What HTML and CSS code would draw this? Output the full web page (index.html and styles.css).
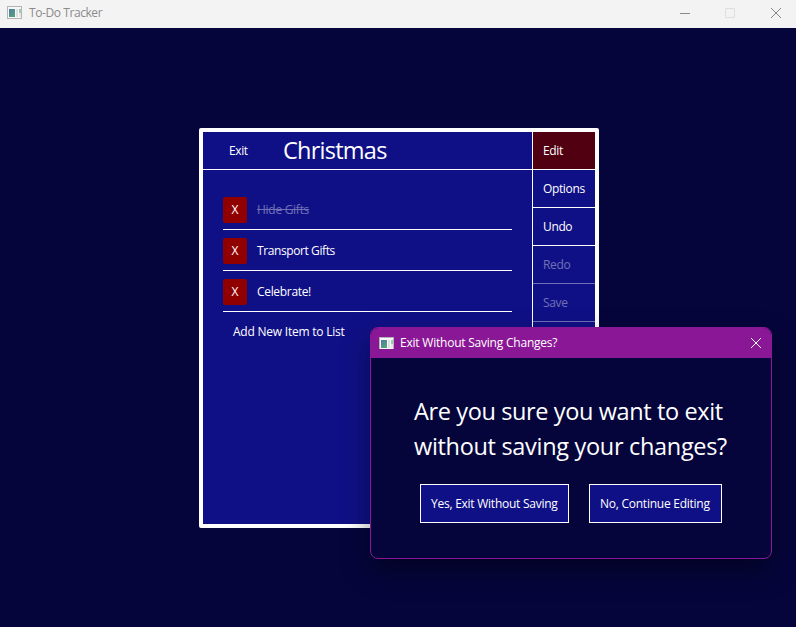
FILE: index.html
```html
<!DOCTYPE html>
<html lang="en">
<head>
<meta charset="utf-8">
<title>To-Do Tracker</title>
<link rel="stylesheet" href="styles.css">
</head>
<body>
<svg class="defs" width="0" height="0" aria-hidden="true">
  <defs>
    <linearGradient id="pane" x1="0" y1="0" x2="0.7" y2="1">
      <stop offset="0" stop-color="#4d78a8"/>
      <stop offset="1" stop-color="#55a37b"/>
    </linearGradient>
    <symbol id="app" viewBox="0 0 15 13">
      <rect width="15" height="13" fill="#b4b4b4"/>
      <rect x="1" y="1" width="13" height="11" fill="#f7f7f7"/>
      <rect x="2" y="3" width="6" height="8" fill="url(#pane)"/>
      <rect x="9" y="3" width="2" height="8" fill="#dedede"/>
      <rect x="12" y="3" width="2" height="4" fill="#9fc9b9"/>
      <rect x="12" y="7" width="2" height="4" fill="#e6e6e6"/>
    </symbol>
  </defs>
</svg>
<div class="window">
  <header class="titlebar">
    <svg class="app-icon" width="15" height="13"><use href="#app"/></svg>
    <span class="title">To-Do Tracker</span>
    <div class="controls">
      <svg width="10" height="10" viewBox="0 0 10 10"><path d="M0 5.5H10" stroke="#8a8a8a"/></svg>
      <svg width="10" height="10" viewBox="0 0 10 10"><rect x=".5" y=".5" width="9" height="9" rx=".5" fill="none" stroke="#dedede"/></svg>
      <svg width="10" height="10" viewBox="0 0 10 10"><path d="M0 0L10 10M10 0L0 10" stroke="#858585"/></svg>
    </div>
  </header>
  <main class="desktop">
    <section class="card">
      <div class="main">
        <div class="head"><span class="exit">Exit</span><h1>Christmas</h1></div>
        <ul class="items">
          <li><button class="remove">X</button><span class="done">Hide Gifts</span></li>
          <li><button class="remove">X</button><span>Transport Gifts</span></li>
          <li><button class="remove">X</button><span class="celebrate">Celebrate!</span></li>
        </ul>
        <div class="add"><span>Add New Item to List</span></div>
      </div>
      <nav class="side">
        <div class="entry active">Edit</div>
        <div class="entry">Options</div>
        <div class="entry">Undo</div>
        <div class="entry off">Redo</div>
        <div class="entry off">Save</div>
      </nav>
    </section>
  </main>
  <section class="dialog">
    <header class="dialog-bar">
      <svg class="app-icon" width="15" height="12" viewBox="0 0 15 12"><use href="#app" width="15" height="13"/></svg>
      <span class="dialog-title">Exit Without Saving Changes?</span>
      <svg class="close" width="10" height="10" viewBox="0 0 10 10"><path d="M0 0L10 10M10 0L0 10" stroke="#fff"/></svg>
    </header>
    <div class="dialog-body">
      <p class="question"><span class="q1">Are you sure you want to exit</span><br><span class="q2">without saving your changes?</span></p>
      <div class="actions">
        <button class="yes">Yes, Exit Without Saving</button>
        <button class="no">No, Continue Editing</button>
      </div>
    </div>
  </section>
</div>
</body>
</html>
```
FILE: styles.css
```css
* { box-sizing: border-box; }
body {
  margin: 0;
  font: 12px/16px "Open Sans", "Noto Sans", sans-serif;
  color: #fff;
  white-space: nowrap;
}
svg { display: block; flex: none; }
.defs { position: absolute; }
button { font: inherit; color: inherit; padding: 0; border: 0; }
.window {
  position: relative;
  width: 796px;
  height: 627px;
  background: #05053c;
  overflow: hidden;
  display: flex;
  flex-direction: column;
}
.titlebar {
  height: 28px;
  background: #f3f3f3;
  color: #8b8b8b;
  display: flex;
  align-items: center;
  padding: 0 15px 3px 7px;
}
.title { margin-left: 7px; letter-spacing: -0.42px; }
.controls { margin-left: auto; display: flex; gap: 36px; }
.controls svg:first-child { margin-right: -1px; }
.desktop { flex: 1; padding: 100px 0 0 199px; }
.card {
  width: 400px;
  height: 400px;
  border: 4px solid #fff;
  border-radius: 2px;
  background: #101086;
  display: flex;
}
.main { flex: 1; }
.head {
  height: 38px;
  border-bottom: 1px solid #fff;
  display: flex;
  align-items: center;
  padding-left: 26px;
}
.exit { width: 54px; letter-spacing: -0.4px; }
h1 { margin: 0; padding-bottom: 1px; font-size: 23.5px; line-height: 32px; font-weight: 400; letter-spacing: -0.75px; }
.items { list-style: none; margin: 19px 20px 0; padding: 0; }
.items li {
  height: 41px;
  padding: 8px 0 6px;
  border-bottom: 1px solid #fff;
  display: flex;
  align-items: center;
  gap: 10px;
  letter-spacing: -0.4px;
}
.remove { width: 24px; height: 26px; border-radius: 2px; background: #900000; }
.done { color: #7070b6; text-decoration: line-through; letter-spacing: -0.28px; }
.celebrate { letter-spacing: -0.32px; }
.add { padding: 12px 0 0 30px; letter-spacing: -0.22px; }
.side { width: 63px; border-left: 1px solid #fff; }
.entry {
  height: 38px;
  border-bottom: 1px solid #fff;
  padding: 11px 0 0 10px;
  letter-spacing: -0.36px;
}
.active { background: #500010; }
.off { color: #7070b6; border-color: #7070b6; }
.dialog {
  position: absolute;
  left: 370px;
  top: 327px;
  width: 402px;
  height: 232px;
  border: 1px solid #8a1795;
  border-radius: 8px;
  background: #05053c;
  overflow: hidden;
  box-shadow: 0 12px 28px rgba(0, 0, 0, .4);
}
.dialog-bar {
  height: 30px;
  background: #8a1795;
  display: flex;
  align-items: center;
  padding: 0 10px 1px 8px;
}
.dialog-title { margin-left: 6px; letter-spacing: -0.22px; }
.close { margin-left: auto; }
.dialog-body { padding: 36px 42px 0 43px; }
.question { margin: 0; font-size: 23.5px; line-height: 35px; }
.q1 { letter-spacing: -0.38px; }
.q2 { letter-spacing: -0.31px; }
.actions { margin: 20px 0 0 6px; display: flex; gap: 20px; }
.actions button {
  height: 39px;
  border: 1px solid #fff;
  background: #101086;
  letter-spacing: -0.25px;
  text-align: left;
  padding-left: 10px;
}
.yes { width: 149px; }
.no { width: 133px; }
```
